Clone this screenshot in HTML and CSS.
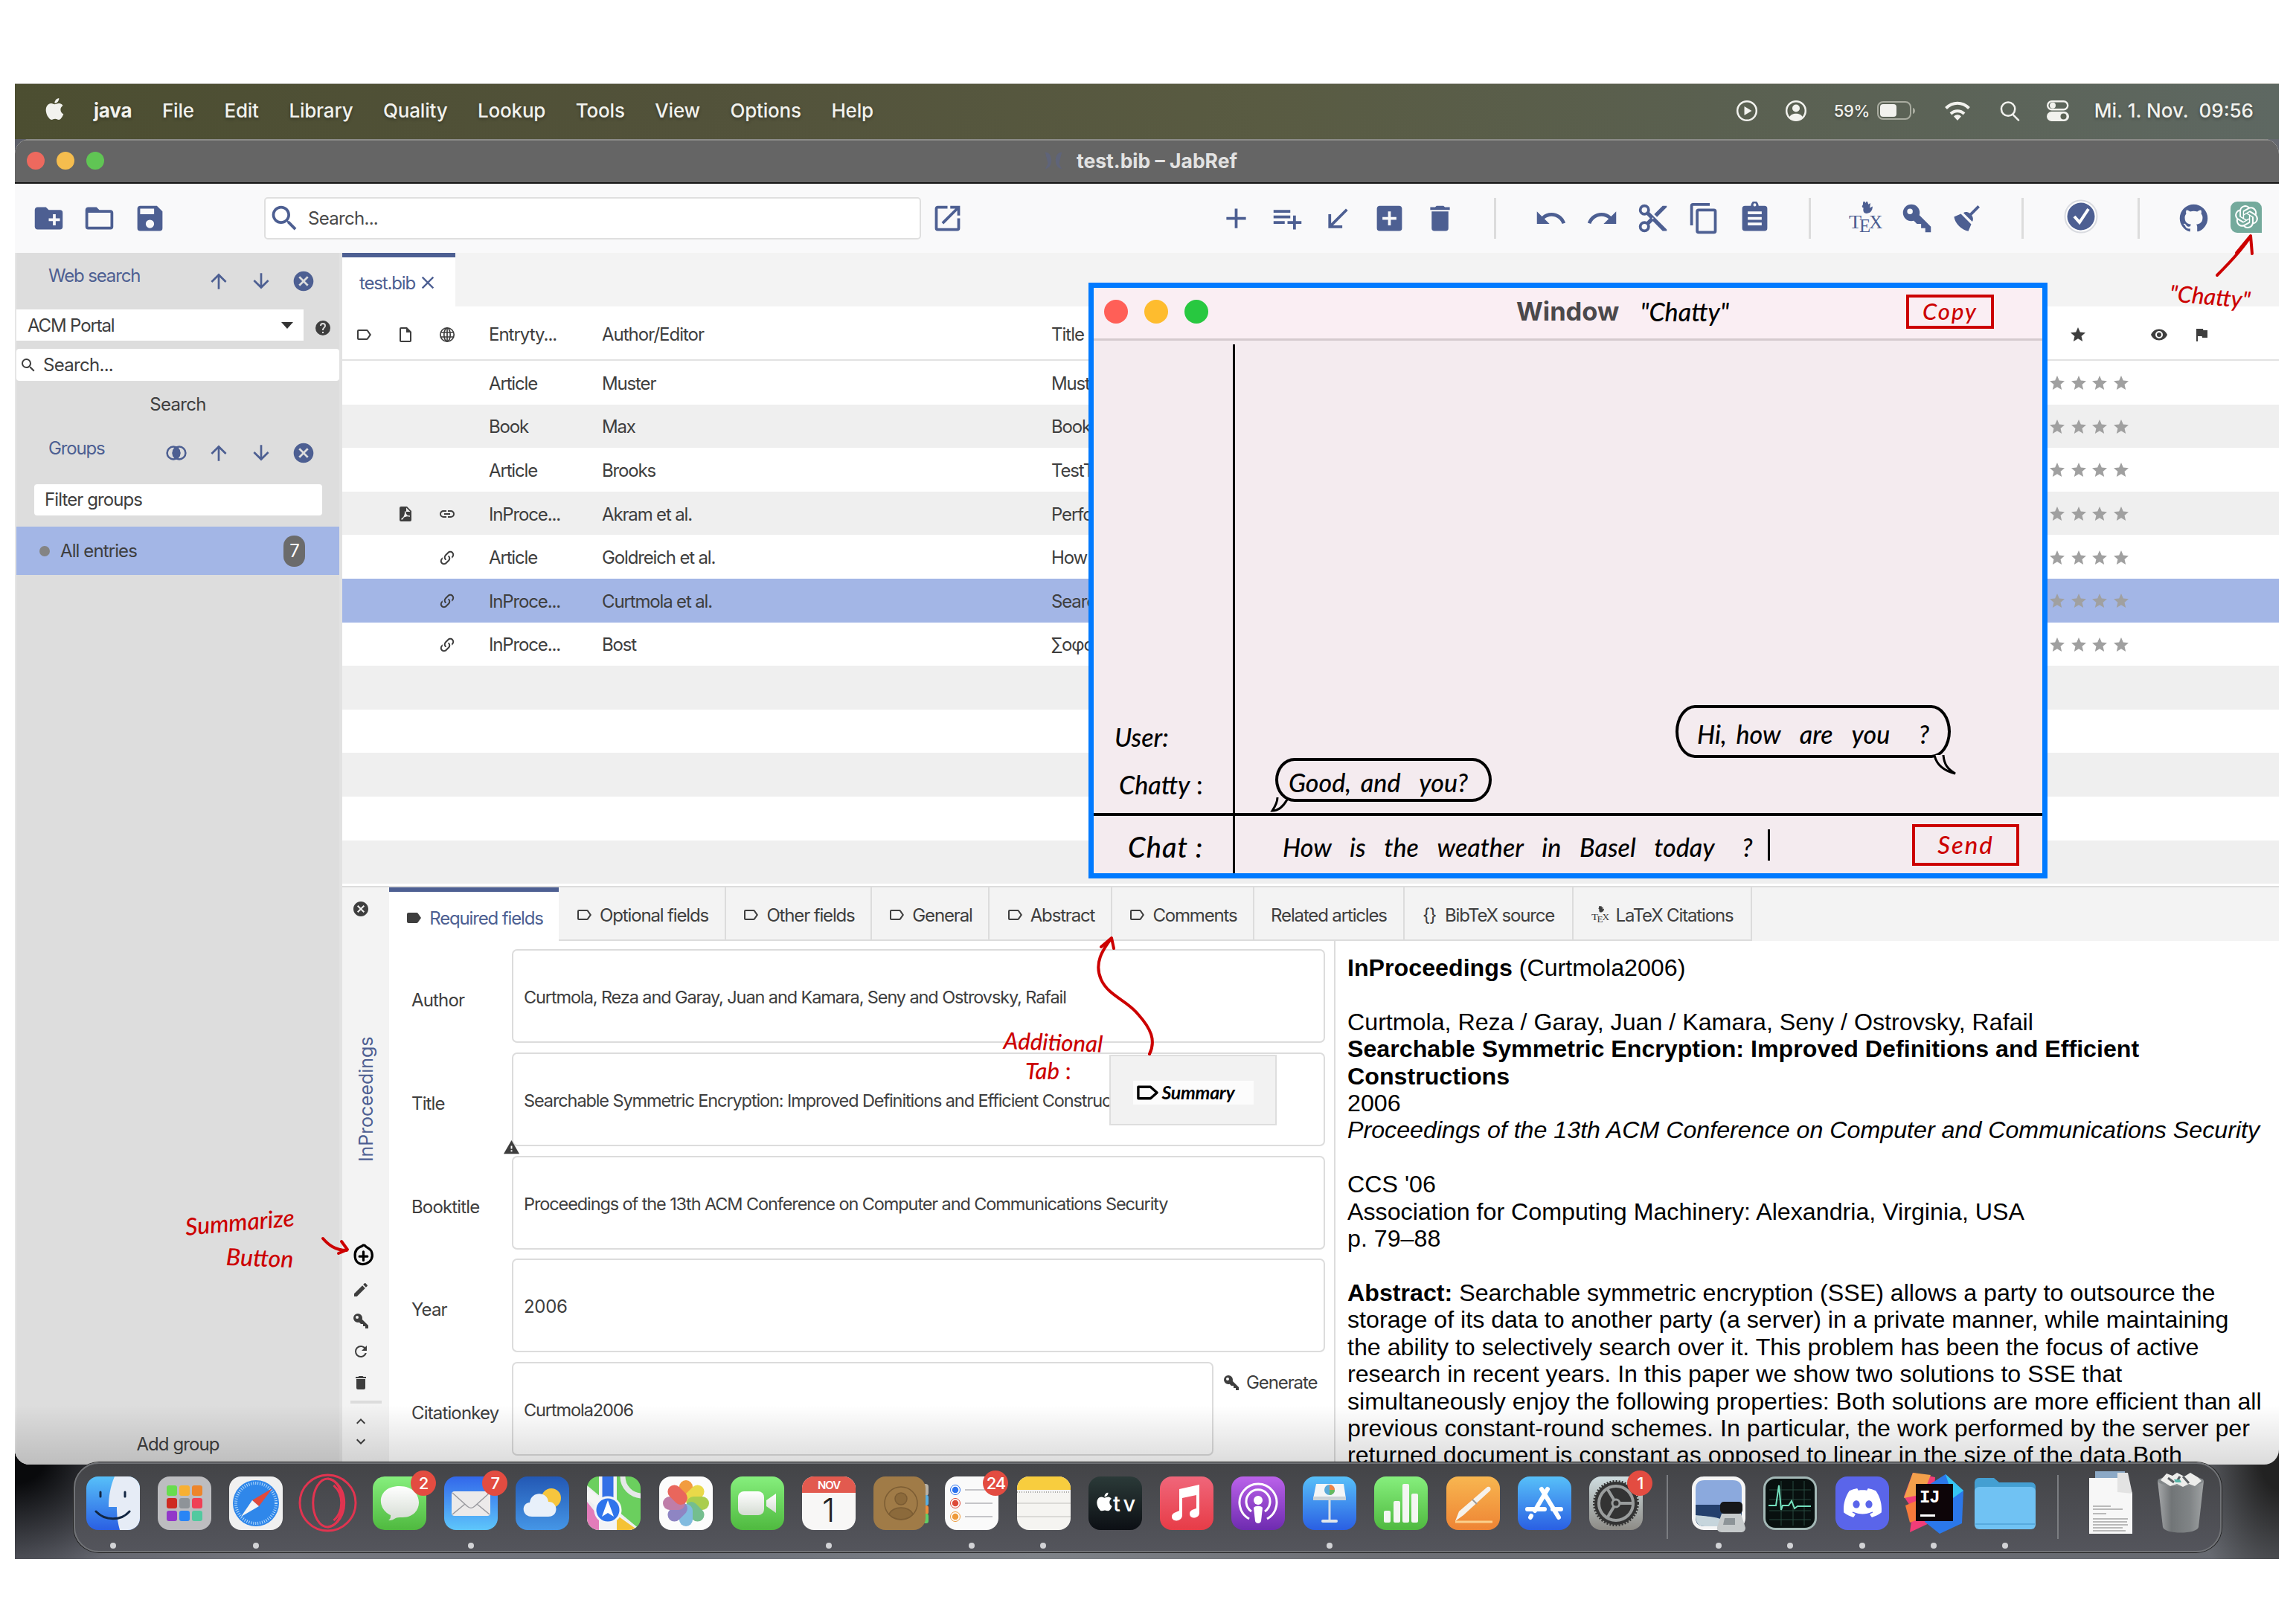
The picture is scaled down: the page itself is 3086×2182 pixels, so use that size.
FILE: index.html
```html
<!DOCTYPE html>
<html lang="en">
<head>
<meta charset="utf-8">
<title>test.bib – JabRef</title>
<link rel="stylesheet" href="styles.css">
</head>
<body>
<svg class="defs" width="0" height="0">
<defs>
<symbol id="apple" viewBox="0 0 24 24"><path d="M12.152 6.896c-.948 0-2.415-1.078-3.96-1.04-2.04.027-3.91 1.183-4.961 3.014-2.117 3.675-.546 9.103 1.519 12.09 1.013 1.454 2.208 3.09 3.792 3.039 1.52-.065 2.09-.987 3.935-.987 1.831 0 2.35.987 3.96.948 1.637-.026 2.676-1.48 3.676-2.948 1.156-1.688 1.636-3.325 1.662-3.415-.039-.013-3.182-1.221-3.22-4.857-.026-3.04 2.48-4.494 2.597-4.559-1.429-2.09-3.623-2.324-4.39-2.376-2-.156-3.675 1.09-4.61 1.09zM15.53 3.83c.843-1.012 1.4-2.427 1.245-3.83-1.207.052-2.662.805-3.532 1.818-.78.896-1.454 2.338-1.273 3.714 1.338.104 2.715-.688 3.559-1.701"/></symbol>
<symbol id="folder-plus" viewBox="0 0 24 24"><path d="M10,4L12,6H20A2,2 0 0,1 22,8V18A2,2 0 0,1 20,20H4C2.89,20 2,19.1 2,18V6C2,4.89 2.89,4 4,4H10M15,9V12H12V14H15V17H17V14H20V12H17V9H15Z"/></symbol>
<symbol id="folder" viewBox="0 0 24 24"><path d="M20,18H4V8H20M20,6H12L10,4H4C2.89,4 2,4.89 2,6V18A2,2 0 0,0 4,20H20A2,2 0 0,0 22,18V8C22,6.89 21.1,6 20,6Z"/></symbol>
<symbol id="save" viewBox="0 0 24 24"><path d="M15,9H5V5H15M12,19A3,3 0 0,1 9,16A3,3 0 0,1 12,13A3,3 0 0,1 15,16A3,3 0 0,1 12,19M17,3H5C3.89,3 3,3.9 3,5V19A2,2 0 0,0 5,21H19A2,2 0 0,0 21,19V7L17,3Z"/></symbol>
<symbol id="magnify" viewBox="0 0 24 24"><path d="M9.5,3A6.5,6.5 0 0,1 16,9.5C16,11.11 15.41,12.59 14.44,13.73L14.71,14H15.5L20.5,19L19,20.5L14,15.5V14.71L13.73,14.44C12.59,15.41 11.11,16 9.5,16A6.5,6.5 0 0,1 3,9.5A6.5,6.5 0 0,1 9.5,3M9.5,5C7,5 5,7 5,9.5C5,12 7,14 9.5,14C12,14 14,12 14,9.5C14,7 12,5 9.5,5Z"/></symbol>
<symbol id="open" viewBox="0 0 24 24"><path d="M14,3V5H17.59L7.76,14.83L9.17,16.24L19,6.41V10H21V3M19,19H5V5H12V3H5C3.89,3 3,3.9 3,5V19A2,2 0 0,0 5,21H19A2,2 0 0,0 21,19V12H19V19Z"/></symbol>
<symbol id="plus" viewBox="0 0 24 24"><path d="M19,13H13V19H11V13H5V11H11V5H13V11H19V13Z"/></symbol>
<symbol id="list-plus" viewBox="0 0 24 24"><path d="M2,16H10V14H2M18,14V10H16V14H12V16H16V20H18V16H22V14M14,6H2V8H14M14,10H2V12H14V10Z"/></symbol>
<symbol id="arrow-bl" viewBox="0 0 24 24"><path d="M19,6.41L17.59,5L7,15.59V9H5V19H15V17H8.41L19,6.41Z"/></symbol>
<symbol id="plus-box" viewBox="0 0 24 24"><path d="M17,13H13V17H11V13H7V11H11V7H13V11H17M19,3H5C3.89,3 3,3.89 3,5V19A2,2 0 0,0 5,21H19A2,2 0 0,0 21,19V5C21,3.89 20.1,3 19,3Z"/></symbol>
<symbol id="delete" viewBox="0 0 24 24"><path d="M19,4H15.5L14.5,3H9.5L8.5,4H5V6H19M6,19A2,2 0 0,0 8,21H16A2,2 0 0,0 18,19V7H6V19Z"/></symbol>
<symbol id="undo" viewBox="0 0 24 24"><path d="M12.5,8C9.85,8 7.45,9 5.6,10.6L2,7V16H11L7.38,12.38C8.77,11.22 10.54,10.5 12.5,10.5C16.04,10.5 19.05,12.81 20.1,16L22.47,15.22C21.08,11.03 17.15,8 12.5,8Z"/></symbol>
<symbol id="redo" viewBox="0 0 24 24"><path d="M18.4,10.6C16.55,9 14.15,8 11.5,8C6.85,8 2.92,11.03 1.54,15.22L3.9,16C4.95,12.81 7.95,10.5 11.5,10.5C13.45,10.5 15.23,11.22 16.62,12.38L13,16H22V7L18.4,10.6Z"/></symbol>
<symbol id="cut" viewBox="0 0 24 24"><path d="M19,3L13,9L15,11L22,4V3M12,12.5A0.5,0.5 0 0,1 11.5,12A0.5,0.5 0 0,1 12,11.5A0.5,0.5 0 0,1 12.5,12A0.5,0.5 0 0,1 12,12.5M6,20A2,2 0 0,1 4,18C4,16.89 4.9,16 6,16A2,2 0 0,1 8,18C8,19.11 7.1,20 6,20M6,8A2,2 0 0,1 4,6C4,4.89 4.9,4 6,4A2,2 0 0,1 8,6C8,7.11 7.1,8 6,8M9.64,7.64C9.87,7.14 10,6.59 10,6A4,4 0 0,0 6,2A4,4 0 0,0 2,6A4,4 0 0,0 6,10C6.59,10 7.14,9.87 7.64,9.64L10,12L7.64,14.36C7.14,14.13 6.59,14 6,14A4,4 0 0,0 2,18A4,4 0 0,0 6,22A4,4 0 0,0 10,18C10,17.41 9.87,16.86 9.64,16.36L12,14L19,21H22V20L9.64,7.64Z"/></symbol>
<symbol id="copy" viewBox="0 0 24 24"><path d="M19,21H8V7H19M19,5H8A2,2 0 0,0 6,7V21A2,2 0 0,0 8,23H19A2,2 0 0,0 21,21V7A2,2 0 0,0 19,5M16,1H4A2,2 0 0,0 2,3V17H4V3H16V1Z"/></symbol>
<symbol id="paste" viewBox="0 0 24 24"><path d="M17,9H7V7H17M17,13H7V11H17M17,17H7V15H17M12,1.2A1,1 0 0,1 13,2.2A1,1 0 0,1 12,3.4A1,1 0 0,1 11,2.2A1,1 0 0,1 12,1.2M19,3H14.82C14.4,.84 13.3,-.6 12,-.6C10.7,-.6 9.6,.84 9.18,3H5A2,2 0 0,0 3,5V19A2,2 0 0,0 5,21H19A2,2 0 0,0 21,19V5A2,2 0 0,0 19,3Z"/></symbol>
<symbol id="tex" viewBox="0 0 48 48"><path d="M21 -3l3 5 2-4 2 6 3-2-1 7 4-2c0 7-4 10-9 10-4 0-5-4-4-8-2 0-3-3-1-4z"/><text x="0" y="38" font-family="Liberation Serif" font-size="27" textLength="17" lengthAdjust="spacingAndGlyphs">T</text><text x="15" y="44" font-family="Liberation Serif" font-size="27" textLength="15" lengthAdjust="spacingAndGlyphs">E</text><text x="29" y="38" font-family="Liberation Serif" font-size="27" textLength="18" lengthAdjust="spacingAndGlyphs">X</text></symbol>
<symbol id="key" viewBox="0 0 24 24"><path d="M22,18V22H18V19H15V16H12L9.74,13.74C9.19,13.91 8.61,14 8,14A6,6 0 0,1 2,8A6,6 0 0,1 8,2A6,6 0 0,1 14,8C14,8.61 13.91,9.19 13.74,9.74L22,18M7,5A2,2 0 0,0 5,7A2,2 0 0,0 7,9A2,2 0 0,0 9,7A2,2 0 0,0 7,5Z"/></symbol>
<symbol id="broom" viewBox="0 0 24 24"><path d="M19.36,2.72L20.78,4.14L15.06,9.85C16.13,11.39 16.28,13.24 15.38,14.44L9.06,8.12C10.26,7.22 12.11,7.37 13.65,8.44L19.36,2.72M5.93,17.57C3.92,15.56 2.69,13.16 2.35,10.92L7.23,8.83L14.67,16.27L12.58,21.15C10.34,20.81 7.94,19.58 5.93,17.57Z"/></symbol>
<symbol id="github" viewBox="0 0 24 24"><path d="M12,2A10,10 0 0,0 2,12C2,16.42 4.87,20.17 8.84,21.5C9.34,21.58 9.5,21.27 9.5,21C9.5,20.77 9.5,20.14 9.5,19.31C6.73,19.91 6.14,17.97 6.14,17.97C5.68,16.81 5.03,16.5 5.03,16.5C4.12,15.88 5.1,15.9 5.1,15.9C6.1,15.97 6.63,16.93 6.63,16.93C7.5,18.45 8.97,18 9.54,17.76C9.63,17.11 9.89,16.67 10.17,16.42C7.95,16.17 5.62,15.31 5.62,11.5C5.62,10.39 6,9.5 6.65,8.79C6.55,8.54 6.2,7.5 6.75,6.15C6.75,6.15 7.59,5.88 9.5,7.17C10.29,6.95 11.15,6.84 12,6.84C12.85,6.84 13.71,6.95 14.5,7.17C16.41,5.88 17.25,6.15 17.25,6.15C17.8,7.5 17.45,8.54 17.35,8.79C18,9.5 18.38,10.39 18.38,11.5C18.38,15.32 16.04,16.16 13.81,16.41C14.17,16.72 14.5,17.33 14.5,18.26C14.5,19.6 14.5,20.68 14.5,21C14.5,21.27 14.66,21.59 15.17,21.5C19.14,20.16 22,16.42 22,12A10,10 0 0,0 12,2Z"/></symbol>
<symbol id="openai" viewBox="0 0 24 24"><path d="M22.2819 9.8211a5.9847 5.9847 0 0 0-.5157-4.9108 6.0462 6.0462 0 0 0-6.5098-2.9A6.0651 6.0651 0 0 0 4.9807 4.1818a5.9847 5.9847 0 0 0-3.9977 2.9 6.0462 6.0462 0 0 0 .7427 7.0966 5.98 5.98 0 0 0 .511 4.9107 6.051 6.051 0 0 0 6.5146 2.9001A5.9847 5.9847 0 0 0 13.2599 24a6.0557 6.0557 0 0 0 5.7718-4.2058 5.9894 5.9894 0 0 0 3.9977-2.9001 6.0557 6.0557 0 0 0-.7475-7.0729zm-9.022 12.6081a4.4755 4.4755 0 0 1-2.8764-1.0408l.1419-.0804 4.7783-2.7582a.7948.7948 0 0 0 .3927-.6813v-6.7369l2.02 1.1686a.071.071 0 0 1 .038.052v5.5826a4.504 4.504 0 0 1-4.4945 4.4944zm-9.6607-4.1254a4.4708 4.4708 0 0 1-.5346-3.0137l.142.0852 4.783 2.7582a.7712.7712 0 0 0 .7806 0l5.8428-3.3685v2.3324a.0804.0804 0 0 1-.0332.0615L9.74 19.9502a4.4992 4.4992 0 0 1-6.1408-1.6464zM2.3408 7.8956a4.485 4.485 0 0 1 2.3655-1.9728V11.6a.7664.7664 0 0 0 .3879.6765l5.8144 3.3543-2.0201 1.1685a.0757.0757 0 0 1-.071 0l-4.8303-2.7865A4.504 4.504 0 0 1 2.3408 7.872zm16.5963 3.8558L13.1038 8.364 15.1192 7.2a.0757.0757 0 0 1 .071 0l4.8303 2.7913a4.4944 4.4944 0 0 1-.6765 8.1042v-5.6772a.79.79 0 0 0-.407-.667zm2.0107-3.0231l-.142-.0852-4.7735-2.7818a.7759.7759 0 0 0-.7854 0L9.409 9.2297V6.8974a.0662.0662 0 0 1 .0284-.0615l4.8303-2.7866a4.4992 4.4992 0 0 1 6.6802 4.66zM8.3065 12.863l-2.02-1.1638a.0804.0804 0 0 1-.038-.0567V6.0742a4.4992 4.4992 0 0 1 7.3757-3.4537l-.142.0805L8.704 5.459a.7948.7948 0 0 0-.3927.6813zm1.0976-2.3654l2.602-1.4998 2.6069 1.4998v2.9994l-2.5974 1.4997-2.6067-1.4997Z"/></symbol>
<symbol id="up" viewBox="0 0 24 24"><path d="M13,20H11V8L5.5,13.5L4.08,12.08L12,4.16L19.92,12.08L18.5,13.5L13,8V20Z"/></symbol>
<symbol id="down" viewBox="0 0 24 24"><path d="M11,4H13V16L18.500,10.500L19.920,11.920L12,19.840L4.080,11.920L5.500,10.500L11,16V4Z"/></symbol>
<symbol id="close-circle" viewBox="0 0 24 24"><path d="M12,2C17.53,2 22,6.47 22,12C22,17.53 17.53,22 12,22C6.47,22 2,17.53 2,12C2,6.47 6.47,2 12,2M15.59,7L12,10.59L8.41,7L7,8.41L10.59,12L7,15.59L8.41,17L12,13.41L15.59,17L17,15.59L13.41,12L17,8.41L15.59,7Z"/></symbol>
<symbol id="close" viewBox="0 0 24 24"><path d="M19,6.41L17.59,5L12,10.59L6.41,5L5,6.41L10.59,12L5,17.59L6.41,19L12,13.41L17.59,19L19,17.59L13.41,12L19,6.41Z"/></symbol>
<symbol id="help" viewBox="0 0 24 24"><path d="M15.07,11.25L14.17,12.17C13.45,12.89 13,13.5 13,15H11V14.5C11,13.39 11.45,12.39 12.17,11.67L13.41,10.41C13.78,10.05 14,9.55 14,9C14,7.89 13.1,7 12,7A2,2 0 0,0 10,9H8A4,4 0 0,1 12,5A4,4 0 0,1 16,9C16,9.88 15.64,10.67 15.07,11.25M13,19H11V17H13M12,2A10,10 0 0,0 2,12A10,10 0 0,0 12,22A10,10 0 0,0 22,12C22,6.47 17.5,2 12,2Z"/></symbol>
<symbol id="intersect" viewBox="0 0 24 24"><g fill="none" stroke="currentColor" stroke-width="1.900"><circle cx="9" cy="12" r="6.300"/><circle cx="15" cy="12" r="6.300"/></g><path d="M12 6a6.500 6.500 0 0 1 0 12a6.500 6.500 0 0 1 0-12z"/></symbol>
<symbol id="file" viewBox="0 0 24 24"><path d="M14,2H6A2,2 0 0,0 4,4V20A2,2 0 0,0 6,22H18A2,2 0 0,0 20,20V8L14,2M18,20H6V4H13V9H18V20Z"/></symbol>
<symbol id="pdf" viewBox="0 0 24 24"><path fill-rule="evenodd" d="M14,2H6A2,2 0 0,0 4,4V20A2,2 0 0,0 6,22H18A2,2 0 0,0 20,20V8L14,2M13,3.500L18.500,9H13ZM10.900,8.500h1.600c-.3 2.500.5 4 2.500 5.400l3 .3v1.600l-4-.5-4 1.200-2 3h-1.800l.3-1.200 2.700-2.400c1.500-2.600 2-4.700 1.700-7.400z"/></symbol>
<symbol id="globe" viewBox="0 0 24 24"><g fill="none" stroke="currentColor" stroke-width="1.700"><circle cx="12" cy="12" r="9.200"/><ellipse cx="12" cy="12" rx="4.200" ry="9"/><path d="M12 3v18M3.500 9h17M3.500 15h17"/></g></symbol>
<symbol id="tag" viewBox="0 0 24 24"><path d="M16,17H5V7H16L19.55,12M17.63,5.84C17.27,5.33 16.67,5 16,5H5A2,2 0 0,0 3,7V17A2,2 0 0,0 5,19H16C16.67,19 17.27,18.66 17.63,18.15L22,12L17.63,5.84Z"/></symbol>
<symbol id="tag-fill" viewBox="0 0 24 24"><path d="M17.63,5.84C17.27,5.33 16.67,5 16,5H5A2,2 0 0,0 3,7V17A2,2 0 0,0 5,19H16C16.67,19 17.27,18.66 17.63,18.15L22,12L17.63,5.84Z"/></symbol>
<symbol id="linkv" viewBox="0 0 24 24"><path d="M10.59,13.41C11,13.8 11,14.44 10.59,14.83C10.2,15.22 9.56,15.22 9.17,14.83C7.22,12.88 7.22,9.71 9.17,7.76V7.76L12.71,4.22C14.66,2.27 17.83,2.27 19.78,4.22C21.73,6.17 21.73,9.34 19.78,11.29L18.29,12.78C18.3,11.96 18.17,11.14 17.89,10.36L18.36,9.88C19.54,8.71 19.54,6.81 18.36,5.64C17.19,4.46 15.29,4.46 14.12,5.64L10.59,9.17C9.41,10.34 9.41,12.24 10.59,13.41M13.41,9.17C13.8,8.78 14.44,8.78 14.83,9.17C16.78,11.12 16.78,14.29 14.83,16.24V16.24L11.29,19.78C9.34,21.73 6.17,21.73 4.22,19.78C2.27,17.83 2.27,14.66 4.22,12.71L5.71,11.22C5.7,12.04 5.83,12.86 6.11,13.65L5.64,14.12C4.46,15.29 4.46,17.19 5.64,18.36C6.81,19.54 8.71,19.54 9.88,18.36L13.41,14.83C14.59,13.66 14.59,11.76 13.41,10.59C13,10.2 13,9.56 13.41,9.17Z"/></symbol>
<symbol id="link" viewBox="0 0 24 24"><path d="M3.9,12C3.9,10.29 5.29,8.9 7,8.9H11V7H7A5,5 0 0,0 2,12A5,5 0 0,0 7,17H11V15.1H7C5.29,15.1 3.9,13.71 3.9,12M8,13H16V11H8V13M17,7H13V8.9H17C18.71,8.9 20.1,10.29 20.1,12C20.1,13.71 18.71,15.1 17,15.1H13V17H17A5,5 0 0,0 22,12A5,5 0 0,0 17,7Z"/></symbol>
<symbol id="star" viewBox="0 0 24 24"><path d="M12,17.27L18.18,21L16.54,13.97L22,9.24L14.81,8.62L12,2L9.19,8.62L2,9.24L7.45,13.97L5.82,21L12,17.27Z"/></symbol>
<symbol id="eye" viewBox="0 0 24 24"><path d="M12,9A3,3 0 0,0 9,12A3,3 0 0,0 12,15A3,3 0 0,0 15,12A3,3 0 0,0 12,9M12,17A5,5 0 0,1 7,12A5,5 0 0,1 12,7A5,5 0 0,1 17,12A5,5 0 0,1 12,17M12,4.5C7,4.5 2.73,7.61 1,12C2.73,16.39 7,19.5 12,19.5C17,19.5 21.27,16.39 23,12C21.27,7.61 17,4.5 12,4.5Z"/></symbol>
<symbol id="flag" viewBox="0 0 24 24"><path d="M14.4,6L14,4H5V21H7V14H12.6L13,16H20V6H14.4Z"/></symbol>
<symbol id="pencil" viewBox="0 0 24 24"><path d="M20.71,7.04C21.1,6.65 21.1,6 20.71,5.63L18.37,3.29C18,2.9 17.35,2.9 16.96,3.29L15.12,5.12L18.87,8.87M3,17.25V21H6.75L17.81,9.93L14.06,6.18L3,17.25Z"/></symbol>
<symbol id="refresh" viewBox="0 0 24 24"><path d="M17.65,6.35C16.2,4.9 14.21,4 12,4A8,8 0 0,0 4,12A8,8 0 0,0 12,20C15.73,20 18.84,17.45 19.73,14H17.65C16.83,16.33 14.61,18 12,18A6,6 0 0,1 6,12A6,6 0 0,1 12,6C13.66,6 15.14,6.69 16.22,7.78L13,11H20V4L17.65,6.35Z"/></symbol>
<symbol id="chev-up" viewBox="0 0 24 24"><path d="M7.41,15.41L12,10.83L16.59,15.41L18,14L12,8L6,14L7.41,15.41Z"/></symbol>
<symbol id="chev-down" viewBox="0 0 24 24"><path d="M7.41,8.590L12,13.170L16.590,8.590L18,10L12,16L6,10L7.410,8.590Z"/></symbol>
<symbol id="alert" viewBox="0 0 24 24"><path d="M13,14H11V10H13M13,18H11V16H13M1,21H23L12,2L1,21Z"/></symbol>
<symbol id="discord" viewBox="0 0 24 24"><path d="M20.317 4.3698a19.7913 19.7913 0 00-4.8851-1.5152.0741.0741 0 00-.0785.0371c-.211.3753-.4447.8648-.6083 1.2495-1.8447-.2762-3.68-.2762-5.4868 0-.1636-.3933-.4058-.8742-.6177-1.2495a.077.077 0 00-.0785-.037 19.7363 19.7363 0 00-4.8852 1.515.0699.0699 0 00-.0321.0277C.5334 9.0458-.319 13.5799.0992 18.0578a.0824.0824 0 00.0312.0561c2.0528 1.5076 4.0413 2.4228 5.9929 3.0294a.0777.0777 0 00.0842-.0276c.4616-.6304.8731-1.2952 1.226-1.9942a.076.076 0 00-.0416-.1057c-.6528-.2476-1.2743-.5495-1.8722-.8923a.077.077 0 01-.0076-.1277c.1258-.0943.2517-.1923.3718-.2914a.0743.0743 0 01.0776-.0105c3.9278 1.7933 8.18 1.7933 12.0614 0a.0739.0739 0 01.0785.0095c.1202.099.246.1981.3728.2924a.077.077 0 01-.0066.1276 12.2986 12.2986 0 01-1.873.8914.0766.0766 0 00-.0407.1067c.3604.698.7719 1.3628 1.225 1.9932a.076.076 0 00.0842.0286c1.961-.6067 3.9495-1.5219 6.0023-3.0294a.077.077 0 00.0313-.0552c.5004-5.177-.8382-9.6739-3.5485-13.6604a.061.061 0 00-.0312-.0286zM8.02 15.3312c-1.1825 0-2.1569-1.0857-2.1569-2.419 0-1.3332.9555-2.4189 2.157-2.4189 1.2108 0 2.1757 1.0952 2.1568 2.419 0 1.3332-.9555 2.4189-2.1569 2.4189zm7.9748 0c-1.1825 0-2.1569-1.0857-2.1569-2.419 0-1.3332.9554-2.4189 2.1569-2.4189 1.2108 0 2.1757 1.0952 2.1568 2.419 0 1.3332-.946 2.4189-2.1568 2.4189Z"/></symbol>
<linearGradient id="gGreen" x2="0" y2="1"><stop stop-color="#86ef7d"/><stop offset="1" stop-color="#4fb93f"/></linearGradient>
<linearGradient id="gBlue" x2="0" y2="1"><stop stop-color="#3267ea"/><stop offset="1" stop-color="#5ec6fb"/></linearGradient>
<linearGradient id="gBlue2" x2="0" y2="1"><stop stop-color="#57c0f9"/><stop offset="1" stop-color="#2a5fe3"/></linearGradient>
<linearGradient id="gWeather" x2="0" y2="1"><stop stop-color="#2358b4"/><stop offset="1" stop-color="#4596e6"/></linearGradient>
<linearGradient id="gRed" x2="0" y2="1"><stop stop-color="#f0667a"/><stop offset="1" stop-color="#e73c47"/></linearGradient>
<linearGradient id="gPurple" x2="0" y2="1"><stop stop-color="#bb62ea"/><stop offset="1" stop-color="#6e2bb0"/></linearGradient>
<linearGradient id="gOrange" x2="0" y2="1"><stop stop-color="#f8b650"/><stop offset="1" stop-color="#ee8434"/></linearGradient>
<linearGradient id="gDark" x2="0" y2="1"><stop stop-color="#2b3a38"/><stop offset="1" stop-color="#0c0f14"/></linearGradient>
<linearGradient id="gGlass" x2="1" y2="0"><stop stop-color="#a5a7a9"/><stop offset=".3" stop-color="#717577"/><stop offset=".7" stop-color="#808486"/><stop offset="1" stop-color="#9fa2a3"/></linearGradient>
<linearGradient id="gSilver" x2="0" y2="1"><stop stop-color="#cfdde0"/><stop offset="1" stop-color="#8d8b86"/></linearGradient>
<linearGradient id="gWhite" x2="0" y2="1"><stop stop-color="#fff"/><stop offset="1" stop-color="#d5dcd3"/></linearGradient>
<clipPath id="round"><rect width="72" height="72" rx="16"/></clipPath>
</defs>
</svg>

<main class="desktop">
  <header class="menubar">
    <svg class="apple"><use href="#apple"/></svg>
    <nav class="menus"><b>java</b><span>File</span><span>Edit</span><span>Library</span><span>Quality</span><span>Lookup</span><span>Tools</span><span>View</span><span>Options</span><span>Help</span></nav>
    <div class="status">
      <svg class="s-play" viewBox="0 0 30 30"><circle cx="15" cy="15" r="12.800" fill="none" stroke="#f2f2ee" stroke-width="2.500"/><path d="M11.500 9l10 6-10 6z"/></svg>
      <svg class="s-user" viewBox="0 0 30 30"><circle cx="15" cy="15" r="12.800" fill="none" stroke="#f2f2ee" stroke-width="2.500"/><circle cx="15" cy="11.500" r="5"/><path d="M6 24c2-7 16-7 18 0-4 5-14 5-18 0z"/></svg>
      <span class="pct">59%</span>
      <svg class="s-bat" viewBox="0 0 52 26"><rect x="1" y="1" width="44" height="23" rx="7" fill="none" stroke="#a9aca0" stroke-width="2"/><rect x="4" y="4" width="22" height="17" rx="4"/><path d="M48 9c4 1 4 7 0 8z" fill="#a9aca0"/></svg>
      <svg class="s-wifi" viewBox="0 0 36 26"><path d="M18 26l-5-5.500c3-3 7-3 10 0z"/><path d="M9 17c5-5 13-5 18 0M2.500 9.500c9-9 22-9 31 0" fill="none" stroke="#f2f2ee" stroke-width="4"/></svg>
      <svg class="s-search" viewBox="0 0 28 28"><g fill="none" stroke="#f2f2ee" stroke-width="2.600"><circle cx="11.500" cy="11.500" r="9.500"/><path d="M18 19l8 8" stroke-linecap="round"/></g></svg>
      <svg class="s-ctl" viewBox="0 0 30 28"><rect x="1.200" y="1.200" width="27" height="11" rx="5.500" fill="none" stroke="#f2f2ee" stroke-width="2.400"/><circle cx="8" cy="6.700" r="4"/><rect y="15" width="30" height="13" rx="6.500"/><circle cx="22.500" cy="21.500" r="4" fill="#5c6355"/></svg>
      <span class="clock">Mi. 1. Nov.&nbsp; 09:56</span>
    </div>
  </header>

  <section class="app">
    <div class="titlebar"><i class="tl r"></i><i class="tl y"></i><i class="tl g"></i><svg class="doc-mark" viewBox="0 0 30 30"><path d="M3 3c8 0 9 8 9 12s-2 11-9 12l4-8zM27 3c-8 0-9 8-9 12s2 11 9 12l-4-8z" fill="#5f6479"/></svg><strong>test.bib – JabRef</strong></div>

    <div class="toolbar">
      <svg class="ic tb-new"><use href="#folder-plus"/></svg>
      <svg class="ic tb-open"><use href="#folder"/></svg>
      <svg class="ic tb-save"><use href="#save"/></svg>
      <div class="searchbox"><svg class="ic"><use href="#magnify"/></svg><span>Search...</span></div>
      <svg class="ic tb-pop"><use href="#open"/></svg>
      <div class="group g1"><svg class="ic"><use href="#plus"/></svg><svg class="ic"><use href="#list-plus"/></svg><svg class="ic"><use href="#arrow-bl"/></svg><svg class="ic"><use href="#plus-box"/></svg><svg class="ic"><use href="#delete"/></svg></div>
      <i class="sep s1"></i>
      <div class="group g2"><svg class="ic"><use href="#undo"/></svg><svg class="ic"><use href="#redo"/></svg><svg class="ic"><use href="#cut"/></svg><svg class="ic"><use href="#copy"/></svg><svg class="ic over"><use href="#paste"/></svg></div>
      <i class="sep s2"></i>
      <div class="group g3"><svg class="ic"><use href="#tex"/></svg><svg class="ic"><use href="#key"/></svg><svg class="ic"><use href="#broom"/></svg></div>
      <i class="sep s3"></i>
      <svg class="check" viewBox="0 0 46 46"><circle cx="23" cy="23" r="21.500" fill="#fff" stroke="#d9dbe0" stroke-width="2"/><circle cx="23" cy="23" r="18.500"/><path d="M14 23l7 8 12-18" fill="none" stroke="#fff" stroke-width="4"/></svg>
      <i class="sep s4"></i>
      <svg class="ic git"><use href="#github"/></svg>
      <div class="gpt"><svg><use href="#openai"/></svg></div>
    </div>

    <div class="content">
      <aside class="sidebar">
        <div class="side-head"><span>Web search</span><svg class="ic"><use href="#up"/></svg><svg class="ic"><use href="#down"/></svg><svg class="ic x"><use href="#close-circle"/></svg></div>
        <div class="combo-row"><div class="combo"><span>ACM Portal</span><i class="caret"></i></div><svg class="help"><use href="#help"/></svg></div>
        <div class="side-search"><svg><use href="#magnify"/></svg><span>Search...</span></div>
        <div class="side-btn">Search</div>
        <div class="side-head groups"><span>Groups</span><svg class="ic"><use href="#intersect"/></svg><svg class="ic"><use href="#up"/></svg><svg class="ic"><use href="#down"/></svg><svg class="ic x"><use href="#close-circle"/></svg></div>
        <div class="filter">Filter groups</div>
        <div class="all"><i></i><span>All entries</span><b>7</b></div>
        <div class="add">Add group</div>
      </aside>

      <div class="main">
        <div class="libtabs"><div class="libtab">test.bib<svg><use href="#close"/></svg></div></div>
        <div class="thead row"><svg class="ti"><use href="#tag"/></svg><svg class="ti"><use href="#file"/></svg><svg class="ti"><use href="#globe"/></svg><span>Entryty...</span><span>Author/Editor</span><span>Title</span><div class="flags"><svg><use href="#star"/></svg><svg><use href="#eye"/></svg><svg><use href="#flag"/></svg></div></div>
        <div class="rows">
          <div class="row"><i></i><i></i><i></i><span>Article</span><span>Muster</span><span>Must</span><div class="stars"><svg><use href="#star"/></svg><svg><use href="#star"/></svg><svg><use href="#star"/></svg><svg><use href="#star"/></svg></div></div>
          <div class="row"><i></i><i></i><i></i><span>Book</span><span>Max</span><span>Book</span><div class="stars"><svg><use href="#star"/></svg><svg><use href="#star"/></svg><svg><use href="#star"/></svg><svg><use href="#star"/></svg></div></div>
          <div class="row"><i></i><i></i><i></i><span>Article</span><span>Brooks</span><span>TestT</span><div class="stars"><svg><use href="#star"/></svg><svg><use href="#star"/></svg><svg><use href="#star"/></svg><svg><use href="#star"/></svg></div></div>
          <div class="row"><i></i><svg class="ti"><use href="#pdf"/></svg><svg class="ti"><use href="#link"/></svg><span>InProce...</span><span>Akram et al.</span><span>Perfo</span><div class="stars"><svg><use href="#star"/></svg><svg><use href="#star"/></svg><svg><use href="#star"/></svg><svg><use href="#star"/></svg></div></div>
          <div class="row"><i></i><i></i><svg class="ti"><use href="#linkv"/></svg><span>Article</span><span>Goldreich et al.</span><span>How</span><div class="stars"><svg><use href="#star"/></svg><svg><use href="#star"/></svg><svg><use href="#star"/></svg><svg><use href="#star"/></svg></div></div>
          <div class="row sel"><i></i><i></i><svg class="ti"><use href="#linkv"/></svg><span>InProce...</span><span>Curtmola et al.</span><span>Searc</span><div class="stars"><svg><use href="#star"/></svg><svg><use href="#star"/></svg><svg><use href="#star"/></svg><svg><use href="#star"/></svg></div></div>
          <div class="row"><i></i><i></i><svg class="ti"><use href="#linkv"/></svg><span>InProce...</span><span>Bost</span><span>∑oφo</span><div class="stars"><svg><use href="#star"/></svg><svg><use href="#star"/></svg><svg><use href="#star"/></svg><svg><use href="#star"/></svg></div></div>
          <div class="row"></div><div class="row"></div><div class="row"></div><div class="row"></div><div class="row"></div>
        </div>

        <div class="editor">
          <div class="rail">
            <svg class="r-close"><use href="#close-circle"/></svg>
            <span class="r-type">InProceedings</span>
            <svg class="r-sum" viewBox="0 0 28 30"><path d="M12 4c-7 2-10 7-9 14 1 8 8 10 14 8 6-2 9-8 7-14-1-5-5-5-8-8-1-2-4-1-4 0zM13.500 11v11M8.500 17h10" fill="none" stroke="#000" stroke-width="3" stroke-linecap="round" stroke-linejoin="round"/></svg>
            <svg><use href="#pencil"/></svg><svg><use href="#key"/></svg><svg><use href="#refresh"/></svg><svg><use href="#delete"/></svg>
            <i></i>
            <svg class="chev"><use href="#chev-up"/></svg><svg class="chev"><use href="#chev-down"/></svg>
          </div>
          <div class="ed-body">
            <div class="tabs">
              <div class="tab on w228"><svg><use href="#tag-fill"/></svg>Required fields</div>
              <div class="tab w224"><svg><use href="#tag"/></svg>Optional fields</div>
              <div class="tab w196"><svg><use href="#tag"/></svg>Other fields</div>
              <div class="tab w158"><svg><use href="#tag"/></svg>General</div>
              <div class="tab w165"><svg><use href="#tag"/></svg>Abstract</div>
              <div class="tab w191"><svg><use href="#tag"/></svg>Comments</div>
              <div class="tab w202">Related articles</div>
              <div class="tab w227"><em>{}</em>BibTeX source</div>
              <div class="tab w240"><svg><use href="#tex"/></svg>LaTeX Citations</div>
            </div>
            <div class="panes">
              <div class="form">
                <div class="frow"><label>Author</label><div class="field">Curtmola, Reza and Garay, Juan and Kamara, Seny and Ostrovsky, Rafail</div></div>
                <div class="frow"><label>Title</label><div class="field">Searchable Symmetric Encryption: Improved Definitions and Efficient Construc<svg class="warn"><use href="#alert"/></svg></div></div>
                <div class="frow"><label>Booktitle</label><div class="field">Proceedings of the 13th ACM Conference on Computer and Communications Security</div></div>
                <div class="frow"><label>Year</label><div class="field num">2006</div></div>
                <div class="frow"><label>Citationkey</label><div class="field">Curtmola2006</div><div class="gen"><svg><use href="#key"/></svg>Generate</div></div>
              </div>
              <article class="preview">
                <p><b>InProceedings</b> (Curtmola2006)</p><p>&nbsp;</p>
                <p>Curtmola, Reza / Garay, Juan / Kamara, Seny / Ostrovsky, Rafail</p>
                <p><b>Searchable Symmetric Encryption: Improved Definitions and Efficient</b></p><p><b>Constructions</b></p>
                <p>2006</p><p class="it">Proceedings of the 13th ACM Conference on Computer and Communications Security</p><p>&nbsp;</p>
                <p>CCS '06</p><p>Association for Computing Machinery: Alexandria, Virginia, USA</p><p>p. 79–88</p><p>&nbsp;</p>
                <p><b>Abstract:</b> Searchable symmetric encryption (SSE) allows a party to outsource the</p>
                <p>storage of its data to another party (a server) in a private manner, while maintaining</p>
                <p>the ability to selectively search over it. This problem has been the focus of active</p>
                <p>research in recent years. In this paper we show two solutions to SSE that</p>
                <p>simultaneously enjoy the following properties: Both solutions are more efficient than all</p>
                <p>previous constant-round schemes. In particular, the work performed by the server per</p>
                <p>returned document is constant as opposed to linear in the size of the data.Both</p>
              </article>
            </div>
          </div>
        </div>
      </div>
    </div>
    <div class="shade"></div>
  </section>

  <section class="chat">
    <div class="chat-head"><i class="tl r"></i><i class="tl y"></i><i class="tl g"></i><strong>Window</strong><span class="hand h-name">"Chatty"</span><span class="hand btn copy">Copy</span></div>
    <div class="chat-log">
      <div class="who"><span class="hand">User:</span><span class="hand">Chatty<u> :</u></span></div>
      <div class="msgs">
        <div class="bubble out hand">Hi, how&nbsp; are&nbsp; you&nbsp;&nbsp; ?<svg viewBox="0 0 34 30"><path d="M2 2c2 10 8 20 28 25-10-6-15-12-16-25" /></svg></div>
        <div class="bubble in hand">Good, and&nbsp; you?<svg viewBox="0 0 24 22"><path d="M8 2C8 9 5 14 1 20c8 0 15-6 20-15"/></svg></div>
      </div>
    </div>
    <div class="chat-in"><span class="hand lbl">Chat&nbsp;:</span><span class="hand q">How&nbsp; is&nbsp; the&nbsp; weather&nbsp; in&nbsp; Basel&nbsp; today&nbsp;&nbsp; ?</span><i class="cursor"></i><span class="hand btn send">Send</span></div>
  </section>

  <div class="newtab"><div><svg viewBox="0 0 32 22"><path d="M3 3v16h17l9-8-9-8z" fill="none" stroke="#000" stroke-width="3.500" stroke-linejoin="round"/></svg><span class="hand">Summary</span></div></div>
  <span class="hand note n-chatty">"Chatty"</span>
  <span class="hand note n-add">Additional</span>
  <span class="hand note n-tab">Tab<u> :</u></span>
  <span class="hand note n-sum">Summarize</span>
  <span class="hand note n-btn">Button</span>
  <svg class="arrow a1" viewBox="0 0 60 64"><path d="M8 60C22 46 42 25 52 9M34 30L53 7l2 24"/></svg>
  <svg class="arrow a2" viewBox="0 0 90 170"><path d="M75 162c9-18 2-34-15-53C45 90 20 84 10 62 0 40 12 22 24 6M10 18L24 6l3 14"/></svg>
  <svg class="arrow a3" viewBox="0 0 44 32"><path d="M4 5c7 8 16 16 32 16M29 9l8 11-12 5"/></svg>

  <footer class="dock">
    <div class="app-ic run"><svg viewBox="0 0 72 72"><g clip-path="url(#round)"><rect width="72" height="72" fill="url(#gBlue2)"/><path d="M38 0C32 14 30 28 30 41h11c0 12 1 20 4 31h27V0z" fill="#e6ecf6"/></g><path d="M19 21v6M52 21v6M13 47c12 13 34 13 45 0" fill="none" stroke="#122642" stroke-width="3" stroke-linecap="round"/></svg></div>
    <div class="app-ic"><svg viewBox="0 0 72 72"><rect width="72" height="72" rx="16" fill="#bdbdc0"/><g><rect x="12" y="12" width="14" height="14" rx="3" fill="#67dd4e"/><rect x="29" y="12" width="14" height="14" rx="3" fill="#f8b032"/><rect x="46" y="12" width="14" height="14" rx="3" fill="#ed852b"/><rect x="12" y="29" width="14" height="14" rx="3" fill="#ce2b22"/><rect x="29" y="29" width="14" height="14" rx="3" fill="#8e9398"/><rect x="46" y="29" width="14" height="14" rx="3" fill="#ef4055"/><rect x="12" y="46" width="14" height="14" rx="3" fill="#9238c9"/><rect x="29" y="46" width="14" height="14" rx="3" fill="#2985f5"/><rect x="46" y="46" width="14" height="14" rx="3" fill="#52c99f"/></g></svg></div>
    <div class="app-ic run"><svg viewBox="0 0 72 72"><rect width="72" height="72" rx="16" fill="#f0f0f0"/><circle cx="36" cy="36" r="31" fill="#2f87ea"/><circle cx="36" cy="36" r="27" fill="none" stroke="#b9dcfa" stroke-width="4" stroke-dasharray="1 2"/><path d="M58 16L31 32l9 8z" fill="#e24a3b"/><path d="M16 54L31 32l9 8z" fill="#f4f4f4"/></svg></div>
    <div class="app-ic"><svg class="opera" viewBox="0 0 80 80"><g fill="none" stroke="#e23450" stroke-width="3"><circle cx="40" cy="40" r="38"/><ellipse cx="40" cy="40" rx="20" ry="33"/><path d="M40 7c30 6 30 60 0 66M48 16c14 12 14 36 0 48" /></g></svg></div>
    <div class="app-ic"><svg viewBox="0 0 72 72"><rect width="72" height="72" rx="16" fill="url(#gGreen)"/><path d="M36 13c34 0 34 42 4 42-5 0-8 0-11 2-3 2-6 2-8 2 3-2 3-4 3-7C4 43 6 13 36 13z" fill="url(#gWhite)"/></svg><b class="badge">2</b></div>
    <div class="app-ic run"><svg viewBox="0 0 72 72"><rect width="72" height="72" rx="16" fill="url(#gBlue)"/><rect x="10" y="20" width="52" height="33" rx="4" fill="#eceaea"/><path d="M11 22l20 18c3 3 7 3 10 0l20-18M11 51l17-14M61 51L44 37" fill="none" stroke="#9a9a9f" stroke-width="1.500"/></svg><b class="badge">7</b></div>
    <div class="app-ic"><svg viewBox="0 0 72 72"><rect width="72" height="72" rx="16" fill="url(#gWeather)"/><circle cx="48" cy="29" r="13" fill="#f6c53d"/><path d="M22 54c-14 0-15-18-3-19 2-16 24-15 25-1 14 0 14 20 0 20z" fill="#e8f0fa"/></svg></div>
    <div class="app-ic"><svg viewBox="0 0 72 72"><g clip-path="url(#round)"><rect width="72" height="72" fill="#6bcf5e"/><path d="M0 12l72 60H0z" fill="#eceef0"/><path d="M0 34l30 38H0z" fill="#e27cba"/><path d="M0 22l72 62" stroke="#f4f4f4" stroke-width="12"/><path d="M40 52l28 20H38z" fill="#f4c235"/><path d="M28 0v72" stroke="#f2f3f5" stroke-width="24"/><path d="M28 0v44" stroke="#3470e6" stroke-width="15"/><circle cx="74" cy="0" r="26" fill="none" stroke="#e6e8e8" stroke-width="7"/></g><circle cx="28" cy="45" r="17" fill="#2f74ec" stroke="#f3f5f8" stroke-width="3"/><path d="M28 32l8 22-8-5-8 5z" fill="#fff"/></svg></div>
    <div class="app-ic"><svg viewBox="0 0 72 72"><rect width="72" height="72" rx="16" fill="#fcfcfc"/><g opacity=".9"><rect x="27" y="5" width="18" height="30" rx="9" fill="#f2922c"/><rect x="27" y="5" width="18" height="30" rx="9" fill="#e9d636" transform="rotate(45 36 36)"/><rect x="27" y="5" width="18" height="30" rx="9" fill="#a2c93c" transform="rotate(90 36 36)"/><rect x="27" y="5" width="18" height="30" rx="9" fill="#66b883" transform="rotate(135 36 36)"/><rect x="27" y="5" width="18" height="30" rx="9" fill="#74b4dc" transform="rotate(180 36 36)"/><rect x="27" y="5" width="18" height="30" rx="9" fill="#8379bd" transform="rotate(225 36 36)"/><rect x="27" y="5" width="18" height="30" rx="9" fill="#b9709f" transform="rotate(270 36 36)"/><rect x="27" y="5" width="18" height="30" rx="9" fill="#e7564b" transform="rotate(315 36 36)"/></g></svg></div>
    <div class="app-ic"><svg viewBox="0 0 72 72"><rect width="72" height="72" rx="16" fill="url(#gGreen)"/><rect x="10" y="20" width="35" height="32" rx="8" fill="url(#gWhite)"/><path d="M48 32l13-9v26l-13-9z" fill="url(#gWhite)"/></svg></div>
    <div class="app-ic run"><svg viewBox="0 0 72 72"><g clip-path="url(#round)"><rect width="72" height="72" fill="#f8f7f6"/><rect width="72" height="22" fill="#e25a4f"/></g><text x="36" y="17" text-anchor="middle" font-family="Inter" font-weight="600" font-size="15" fill="#fff">NOV</text><text x="35" y="61" text-anchor="middle" font-family="Inter" font-weight="300" font-size="44" fill="#222">1</text></svg></div>
    <div class="app-ic"><svg viewBox="0 0 72 72"><rect x="60" y="10" width="14" height="16" rx="4" fill="#b9b3a8"/><rect x="60" y="25" width="14" height="14" rx="3" fill="#58aee0"/><rect x="60" y="39" width="14" height="12" rx="3" fill="#ef8d3b"/><rect x="60" y="50" width="14" height="13" rx="3" fill="#61ce66"/><rect width="70" height="72" rx="16" fill="#a07b47"/><g fill="#8c6a3b" stroke="#7b5c33" stroke-width="1.500"><circle cx="37" cy="36" r="22" fill="none"/><circle cx="37" cy="30" r="8"/><path d="M21 51c4-12 28-12 32 0-8 9-24 9-32 0z"/></g></svg></div>
    <div class="app-ic run"><svg viewBox="0 0 72 72"><rect width="72" height="72" rx="16" fill="#fafafa"/><g stroke="#b4b4b8" stroke-width="1.500"><path d="M27 18h37M27 36h37M27 54h37"/></g><g stroke="#fff" stroke-width="1.500"><circle cx="14" cy="18" r="5" fill="#2c72ee"/><circle cx="14" cy="36" r="5" fill="#dd4a38"/><circle cx="14" cy="54" r="5" fill="#ee9a3a"/></g><g fill="none"><circle cx="14" cy="18" r="6.500" stroke="#2c72ee"/><circle cx="14" cy="36" r="6.500" stroke="#dd4a38"/><circle cx="14" cy="54" r="6.500" stroke="#ee9a3a"/></g></svg><b class="badge">24</b></div>
    <div class="app-ic run"><svg viewBox="0 0 72 72"><g clip-path="url(#round)"><rect width="72" height="72" fill="#f5f4f1"/><rect width="72" height="18" fill="#f8cd3e"/><path d="M0 21h72" stroke="#aaa" stroke-width="2" stroke-dasharray="1 2"/><path d="M0 36h72M0 54h72" stroke="#d2d1ce" stroke-width="1.500"/></g></svg></div>
    <div class="app-ic"><svg viewBox="0 0 72 72"><rect width="72" height="72" rx="16" fill="url(#gDark)"/><svg class="white" x="9" y="21" width="25" height="26" viewBox="0 0 24 24"><use href="#apple"/></svg><text x="33" y="47" font-family="Inter" font-weight="500" font-size="29" textLength="29" fill="#fff">tv</text></svg></div>
    <div class="app-ic"><svg viewBox="0 0 72 72"><rect width="72" height="72" rx="16" fill="url(#gRed)"/><path d="M26 17l27-6v38c0 8-13 9-13 1 0-5 6-6 9-7V25l-19 4v23c0 9-14 10-14 2 0-5 6-6 10-8z" fill="#fff"/></svg></div>
    <div class="app-ic"><svg viewBox="0 0 72 72"><rect width="72" height="72" rx="16" fill="url(#gPurple)"/><g fill="none" stroke="#fff" stroke-width="3"><path d="M24 57a25 25 0 1 1 24 0M27 47a16 16 0 1 1 18 0"/></g><circle cx="36" cy="32" r="6" fill="#fff"/><path d="M30 42c2-3 10-3 12 0l-2 18c-1 4-7 4-8 0z" fill="#fff"/></svg></div>
    <div class="app-ic run"><svg viewBox="0 0 72 72"><rect width="72" height="72" rx="16" fill="url(#gBlue2)"/><path d="M18 10h37l3 20H14z" fill="#f3f5f7"/><path d="M14 27h44v5H14z" fill="#cbd2d8"/><circle cx="36" cy="18" r="7" fill="#59a9d9"/><path d="M36 18v-7a7 7 0 0 1 7 7z" fill="#ef8446"/><path d="M36 18h7a7 7 0 0 1-7 7z" fill="#67b95d"/><path d="M36 32v28" stroke="#d5dde5" stroke-width="3"/><rect x="25" y="58" width="22" height="4" rx="2" fill="#e2e7ec"/></svg></div>
    <div class="app-ic"><svg viewBox="0 0 72 72"><rect width="72" height="72" rx="16" fill="url(#gGreen)"/><g fill="#f4f6f2"><rect x="13" y="46" width="9" height="16" rx="2"/><rect x="26" y="33" width="9" height="29" rx="2"/><rect x="38" y="10" width="9" height="52" rx="2"/><rect x="50" y="23" width="9" height="39" rx="2"/></g></svg></div>
    <div class="app-ic"><svg viewBox="0 0 72 72"><rect width="72" height="72" rx="16" fill="url(#gOrange)"/><path d="M12 61h50" stroke="#fbd08c" stroke-width="3"/><path d="M12 60l5-13 37-32c3-3 7 0 5 4L23 52z" fill="#f6f2ec"/><path d="M35 31l6 6" stroke="#999" stroke-width="2"/></svg></div>
    <div class="app-ic"><svg viewBox="0 0 72 72"><rect width="72" height="72" rx="16" fill="url(#gBlue2)"/><g stroke="#fff" stroke-width="6" stroke-linecap="round"><path d="M32 17l23 38M40 17L23 46M13 44h23M47 44h11M18 53l-1 2"/></g></svg></div>
    <div class="app-ic"><svg viewBox="0 0 72 72"><rect width="72" height="72" rx="16" fill="url(#gSilver)"/><circle cx="36" cy="36" r="29" fill="#333" stroke="#333" stroke-width="4" stroke-dasharray="2 2"/><circle cx="36" cy="36" r="23" fill="none" stroke="#999c9c" stroke-width="4"/><path d="M36 36h23M36 36L24 16M36 36L24 56" stroke="#999c9c" stroke-width="4"/><circle cx="36" cy="36" r="5" fill="#333" stroke="#999c9c" stroke-width="3"/></svg><b class="badge">1</b></div>
    <i class="dsep"></i>
    <div class="app-ic run"><svg viewBox="0 0 72 72"><rect width="72" height="72" rx="16" fill="#f5f5f5"/><path d="M5 39V17C5 9 9 5 17 5h38c8 0 12 4 12 12v22z" fill="#8ba9dd"/><path d="M5 38h62v17c0 8-4 12-12 12H17c-8 0-12-4-12-12z" fill="#24406d"/><path d="M5 52c20 2 40 2 45 15H17c-8 0-12-4-12-15z" fill="#c6d5dc"/><rect x="38" y="34" width="30" height="16" rx="5" fill="#161719"/><path d="M40 50h26l6 19c0 5-4 6-6 6H40c-4 0-7-3-6-7z" fill="#c6cacb"/><path d="M44 56h14v9H42z" fill="#8d9498"/></svg></div>
    <div class="app-ic run"><svg viewBox="0 0 72 72"><rect width="72" height="72" rx="16" fill="#a3b8b6"/><rect x="3" y="3" width="66" height="66" rx="13" fill="#08100f"/><path d="M8 18h56M8 31h56M8 46h56M8 58h56M24 6v60M40 6v60M55 6v60" stroke="#27483f" stroke-width="1"/><path d="M7 39h10l4-27 3 33 2-6h8l4-6 4 10 4-3h18" fill="none" stroke="#74e0be" stroke-width="2"/></svg></div>
    <div class="app-ic run"><svg viewBox="0 0 72 72"><rect width="72" height="72" rx="16" fill="#5a65ea"/><svg class="white" x="10" y="10" width="53" height="51" viewBox="0 0 24 24"><use href="#discord"/></svg></svg></div>
    <div class="app-ic run"><svg class="ij" viewBox="0 0 80 82"><path d="M12 0l30 6-4 60-30 14 4-30-12-18z" fill="#f03d78"/><path d="M12 0l24 3-10 26L0 34z" fill="#f3a04b"/><path d="M2 44l14-6v26l-8 3z" fill="#f77a3b"/><path d="M56 2l24 22-2 44-30 14-20-16 6-50z" fill="#2b78ea"/><path d="M56 2l24 22-14 10z" fill="#35c5f2"/><rect x="16" y="15" width="50" height="50" fill="#0d0508"/><text x="21" y="40" font-family="Liberation Mono" font-weight="bold" font-size="24" fill="#fff">IJ</text><rect x="22" y="56" width="20" height="3" fill="#fff"/></svg></div>
    <div class="app-ic run"><svg class="fold" viewBox="0 0 82 70"><path d="M6 0h20l7 6h43c4 0 6 3 6 6v14H0V7c0-4 2-7 6-7z" fill="#449fd2"/><rect y="12" width="82" height="57" rx="6" fill="#70c2f3"/><path d="M1 62h80" stroke="#57aade" stroke-width="2"/></svg></div>
    <i class="dsep d2"></i>
    <div class="app-ic"><svg class="paper" viewBox="0 0 58 84"><rect x="8" width="40" height="20" fill="#8ca9c6"/><path d="M0 9h40l18 20v55H0z" fill="#f7f7f7"/><path d="M38 2h14l6 28-20-2z" fill="#e3e3e3"/><g stroke="#a5a5a5" stroke-width="1.500"><path d="M5 47h24M5 51h40M5 57h18M5 64h47M5 68h46M5 72h47M5 76h40M5 80h44"/></g></svg></div>
    <div class="app-ic"><svg class="bin" viewBox="0 0 62 84"><path d="M0 12h62l-7 62c-2 10-46 10-48 0z" fill="url(#gGlass)"/><ellipse cx="31" cy="12" rx="31" ry="7" fill="#83888a"/><path d="M4 11l8-9 8 3 6-4 10 5 8-5 10 6 5 5-9 7-8-3-8 4-8-4-9 3z" fill="#ededeb"/><path d="M14 8l8 6M34 6l8 9M26 12l4-6" stroke="#5b5f63" stroke-width="3"/><path d="M22 10h8l2 4h-8z" fill="#57b5a8"/></svg></div>
  </footer>
</main>
</body>
</html>
```

FILE: styles.css
```css
* { box-sizing: border-box; }
body { margin: 0; width: 3086px; height: 2182px; background: #fff; overflow: hidden; font-family: Inter, "Liberation Sans", sans-serif; font-size: 24px; letter-spacing: -1.15px; color: #3e3e3e; white-space: nowrap; }
svg { display: block; flex: none; fill: currentColor; overflow: visible; }
svg.white { fill: #fff; }
i, em, u { font-style: normal; text-decoration: none; }
p { margin: 0; }
.defs { position: absolute; }
.desktop { position: relative; width: 3043px; height: 1984px; margin: 112px 0 0 20px; background: radial-gradient(ellipse 200px 160px at 0 1850px, #090a0c 20%, transparent 100%), radial-gradient(ellipse 120px 200px at 3043px 1850px, #222 20%, transparent 100%), linear-gradient(90deg, #5d5f68, #767880 12%, #6c7079 30%, #7e8288 45%, #6d6f75 60%, #666970 100%); }

.menubar { height: 75px; display: flex; align-items: center; padding: 0 0 3px 39px; background: linear-gradient(90deg, #4c4e31, #52523a 30%, #595b42 55%, #5a6050 75%, #5e6862); color: #f2f2ee; font-size: 26px; font-weight: 500; letter-spacing: -0.2px; text-shadow: 0 2px 4px #0005; border-top: 1px solid #b5b5ae; }
.apple { width: 29px; height: 31px; margin-top: -5px; }
.menus { display: flex; gap: 40.600px; margin-left: 38px; }
.status { margin-left: auto; display: flex; align-items: center; padding-right: 34px; }
.s-play, .s-user { width: 30px; height: 30px; margin-right: 36px; }
.pct { font-size: 22px; letter-spacing: -0.4px; margin-right: 10px; }
.s-bat { width: 52px; height: 26px; margin-right: 38px; }
.s-wifi { width: 36px; height: 26px; margin-right: 39px; }
.s-search { width: 27px; height: 28px; margin-right: 36px; }
.s-ctl { width: 30px; height: 28px; margin-right: 34px; }
.clock { font-size: 26px; letter-spacing: 0; }

.app { height: 1782px; display: flex; flex-direction: column; border-radius: 20px; overflow: hidden; position: relative; background: #fff; }
.titlebar { height: 60px; flex: none; background: #656565; border-top: 2px solid #8b8b88; border-bottom: 2px solid #151515; display: flex; align-items: center; padding: 0 0 2px 16px; gap: 16px; color: #e2e2e2; font-size: 26.500px; letter-spacing: 0; }
.titlebar strong { font-weight: 700; margin-left: 9px; }
.tl { width: 24px; height: 24px; border-radius: 50%; display: block; }
.tl.r { background: #ed695e; } .tl.y { background: #f5bd4e; } .tl.g { background: #60c554; }
.doc-mark { width: 30px; height: 28px; margin: 0 -9px 0 1245px; }
.toolbar { height: 93px; flex: none; background: #f9f9fa; display: flex; align-items: center; color: #4d5f92; }
.ic { width: 45px; height: 45px; }
.tb-new { margin-left: 23px; } .tb-open { margin-left: 23px; } .tb-save { margin-left: 23px; }
.searchbox { margin-left: 131px; width: 883px; height: 57px; border: 2px solid #dfdfdf; border-radius: 5px; background: #fff; display: flex; align-items: center; padding-left: 3px; letter-spacing: -0.7px; }
.searchbox span { margin-left: 9px; color: #4a4a4a; }
.tb-pop { margin-left: 13px; }
.group { display: flex; gap: 23.500px; }
.g1 { margin-left: 343px; } .g2 { margin-left: 51px; } .g3 { margin-left: 51px; }
.sep { width: 3px; height: 55px; background: #dcdcdc; }
.s1 { margin-left: 50px; } .s2 { margin-left: 50px; } .s3 { margin-left: 50px; } .s4 { margin-left: 53px; }
.check { width: 46px; height: 46px; margin: -6px 0 0 54px; }
.git { margin-left: 50px; }
.gpt { margin: -4px 0 0 27px; width: 42px; height: 42px; border-radius: 9px 9px 0 9px; background: #74aa9c; color: #fff; display: grid; place-items: center; }
.gpt svg { width: 31px; height: 31px; }

.content { flex: 1; display: flex; min-height: 0; }
.sidebar { width: 440px; flex: none; background: #dddddd; border-left: 2px solid #e6e6e6; border-right: 4px solid #e2e2e2; display: flex; flex-direction: column; }
.side-head { height: 76px; display: flex; align-items: center; color: #4d5f92; padding-right: 32px; gap: 25px; }
.side-head span { margin: -15px auto 0 43px; }
.side-head .ic { width: 32px; height: 32px; }
.combo-row { display: flex; align-items: center; height: 42px; }
.combo { width: 386px; height: 42px; background: #fff; display: flex; align-items: center; justify-content: space-between; padding: 0 14px 0 15px; }
.caret { border: 8px solid transparent; border-top: 9px solid #333; border-bottom: 0; }
.help { width: 24px; height: 24px; margin: 8px 0 0 14px; }
.side-search { margin-top: 11px; height: 43px; width: 434px; background: #fff; border-radius: 4px; display: flex; align-items: center; padding-left: 4px; }
.side-search svg { width: 24px; height: 24px; margin-right: 8px; }
.side-search, .side-btn { letter-spacing: -0.7px; }
.side-btn { height: 59px; margin-top: 2px; text-align: center; line-height: 60px; }
.side-head.groups { height: 77px; margin-top: -3px; }
.side-head.groups span { margin-top: -12px; }
.filter { margin: 4px 23px 0 24px; height: 42px; background: #fff; border-radius: 4px; line-height: 42px; padding-left: 14px; letter-spacing: -0.9px; }
.all { margin-top: 15px; height: 65px; background: #a3b6e6; display: flex; align-items: center; padding-left: 31px; letter-spacing: -0.9px; }
.all i { width: 14px; height: 14px; border-radius: 50%; background: #848484; margin-right: 14px; }
.all b { margin: 0 46px 0 auto; width: 29px; height: 42px; border-radius: 14px; background: #6b6b6b; color: #fff; font-weight: 400; text-align: center; line-height: 42px; }
.add { margin: auto 0 13px; text-align: center; letter-spacing: -0.9px; }

.main { flex: 1; min-width: 0; display: flex; flex-direction: column; }
.libtabs { height: 72px; flex: none; background: #f3f3f3; }
.libtab { width: 152px; height: 72px; background: #fff; border-top: 6px solid #4d5f92; color: #4d5f92; display: flex; align-items: center; padding: 2px 0 0 23px; }
.libtab svg { width: 28px; height: 28px; margin-left: 3px; }
.row { display: grid; grid-template-columns: 57px 56px 56px 152px 604px 1fr 320px; height: 58.600px; align-items: center; background: #fff; padding-top: 2px; }
.row > :nth-child(1) { margin-left: 17px; } .row > :nth-child(2) { margin-left: 16px; } .row > :nth-child(3) { margin-left: 16px; } .row > span { margin-left: 28px; }
.thead { height: 73px; flex: none; border-bottom: 2px solid #e2e2e2; padding-top: 4px; letter-spacing: -1px; }
.ti { width: 24px; height: 24px; }
.rows { height: 703px; flex: none; }
.rows .row:nth-child(even) { background: #efefef; }
.rows .row.sel { background: #a3b6e6; }
.stars { display: flex; gap: 4.500px; color: #a0a0a0; padding-left: 10px; }
.stars svg { width: 24px; height: 24px; }
.flags { display: flex; padding-left: 38px; }
.flags svg { width: 24px; height: 24px; }
.flags svg:nth-child(2) { margin-left: 85px; } .flags svg:nth-child(3) { margin-left: 33px; }

.editor { flex: 1; min-height: 0; display: flex; margin-top: 3px; border-top: 2px solid #dcdcdc; }
.rail { width: 63px; flex: none; background: #f3f3f3; display: flex; flex-direction: column; align-items: center; padding-right: 13px; }
.rail svg { width: 24px; height: 24px; margin-bottom: 17.500px; }
.rail .r-close { margin: 17px 0 0; }
.r-type { writing-mode: vertical-rl; transform: rotate(180deg); color: #4d5f92; font-size: 25px; letter-spacing: -0.1px; height: 170px; margin: 158px -14px 0 0; text-align: left; }
.rail .r-sum { width: 30px; height: 32px; margin: 109px -8px 19px 0; }
.rail i { width: 42px; height: 4px; background: #dcdcdc; margin: -5px -14px 12px 0; }
.rail .chev { margin: 0 0 3px; }
.ed-body { flex: 1; min-width: 0; display: flex; flex-direction: column; }
.tabs { height: 72px; flex: none; background: #f3f3f3; display: flex; }
.tab { height: 72px; display: flex; align-items: center; justify-content: center; border-right: 2px solid #dcdcdc; border-bottom: 2px solid #dcdcdc; gap: 9px; letter-spacing: -1.150px; padding-top: 4px; }
.tab svg { width: 24px; height: 24px; }
.tab em { margin-right: 3px; }
.tab.on { background: #fff; border-top: 6px solid #4d5f92; border-bottom: 0; border-right: 0; color: #4d5f92; }
.tab.on svg { color: #3e3e3e; }
.w228 { width: 228px; } .w224 { width: 225px; } .w196 { width: 196px; } .w158 { width: 158px; } .w165 { width: 165px; } .w191 { width: 191px; } .w202 { width: 202px; } .w227 { width: 227px; } .w240 { width: 240px; }
.panes { flex: 1; display: flex; min-height: 0; }
.form { width: 1272px; flex: none; border-right: 2px solid #dcdcdc; padding: 11px 12px 0 0; display: flex; flex-direction: column; gap: 12.800px; }
.frow { display: flex; height: 126px; align-items: center; position: relative; }
.frow label { width: 165px; padding-left: 30px; padding-top: 11px; letter-spacing: -0.85px; }
.field { flex: 1; height: 126px; border: 2px solid #dcdcdc; border-radius: 7px; padding-left: 14px; line-height: 125px; font-size: 23.500px; letter-spacing: -1.1px; position: relative; }
.field.num { font-size: 24px; letter-spacing: -0.3px; }
.warn { position: absolute; left: -14px; bottom: -15px; width: 23px; height: 23px; }
.gen { width: 150px; display: flex; gap: 8px; margin-top: -71px; padding-left: 12px; align-items: center; letter-spacing: -1.1px; }
.gen svg { width: 24px; height: 24px; }
.preview { padding: 18px 0 0 16px; font-family: "Liberation Sans", Arial, sans-serif; font-size: 32.200px; letter-spacing: 0; line-height: 36.400px; color: #000; }
.it { font-style: italic; }
.shade { position: absolute; left: 0; right: 0; bottom: 0; height: 80px; background: linear-gradient(transparent, #00000024); }

.chat { position: absolute; left: 1443px; top: 268px; width: 1289px; height: 801px; border: 7px solid #007aff; background: #f4ebef; display: flex; flex-direction: column; color: #000; }
.chat-head { height: 71px; flex: none; background: #faeef3; border-bottom: 3px solid #d5cace; display: flex; align-items: center; padding: 0 0 5px 14px; gap: 22px; }
.chat-head .tl { width: 32px; height: 32px; }
.chat-head .tl.r { background: #ff5f57; } .chat-head .tl.y { background: #febc2e; } .chat-head .tl.g { background: #28c840; }
.chat-head strong { margin-left: 392px; font-size: 34.500px; color: #4b494b; font-weight: 700; letter-spacing: 0; }
.hand { font-family: Lato, "Liberation Sans", sans-serif; font-size: 34px; font-weight: 500; letter-spacing: 0; line-height: 1; font-style: italic; }
.h-name { margin-left: 6px; }
.btn { border: 4px solid #cc0000; color: #cc0000; display: grid; place-items: center; letter-spacing: 2px; }
.copy { width: 118px; height: 46px; margin: 0 65px 0 auto; font-size: 31px; }
.chat-log { flex: 1; display: flex; border-bottom: 4px solid #000; }
.who { width: 190px; border-right: 3px solid #000; margin-top: 5px; display: flex; flex-direction: column; justify-content: flex-end; gap: 30px; padding: 0 0 21px 28px; }
.who .hand + .hand { padding-left: 6px; }
.msgs { flex: 1; display: flex; flex-direction: column; justify-content: flex-end; padding: 0 123px 15px 54px; }
.bubble { position: relative; border: 4px solid #000; border-radius: 26px / 50%; display: flex; align-items: center; justify-content: center; }
.bubble svg { position: absolute; fill: #f4ebef; stroke: #000; stroke-width: 3; }
.out { align-self: flex-end; width: 370px; height: 71px; word-spacing: 5px; padding-top: 6px; }
.out svg { right: -14px; bottom: -28px; width: 34px; height: 30px; }
.in { width: 291px; height: 59px; word-spacing: 5px; padding: 6px 14px 0 0; }
.in svg { left: -9px; bottom: -18px; width: 24px; height: 22px; }
.chat-in { height: 77px; flex: none; display: flex; align-items: center; }
.lbl { width: 190px; height: 77px; border-right: 3px solid #000; padding: 22px 0 0 46px; font-size: 38px; letter-spacing: 1px; }
.q { margin: 7px 0 0 64px; word-spacing: 4.600px; }
.cursor { width: 3px; height: 42px; background: #000; margin-left: 20px; }
.send { width: 144px; height: 56px; margin: 0 31px 0 auto; font-size: 33px; }

.newtab { position: absolute; left: 1471px; top: 1306px; width: 225px; height: 95px; background: #f2f2f2; border: 2px solid #dedede; display: grid; place-items: center; color: #000; }
.newtab div { width: 162px; height: 32px; background: #fcfcfc; display: flex; align-items: center; padding-left: 4px; gap: 4px; margin-top: 6px; }
.newtab svg { width: 31px; height: 22px; }
.newtab .hand { font-size: 25px; letter-spacing: -0.3px; font-weight: 700; }
.note { position: absolute; color: #cc0000; transform-origin: left center; }
.n-chatty { left: 2896px; top: 266px; font-size: 31px; transform: rotate(5deg); }
.n-add { left: 1329px; top: 1271px; font-size: 31px; transform: rotate(2deg); }
.n-tab { left: 1358px; top: 1312px; font-size: 31px; }
.n-sum { left: 229px; top: 1521px; font-size: 32px; transform: rotate(-5deg); }
.n-btn { left: 284px; top: 1561px; font-size: 32px; transform: rotate(2deg); }
.arrow { position: absolute; fill: none; stroke: #cc0000; stroke-width: 4; stroke-linecap: round; stroke-linejoin: round; }
.a1 { left: 2952px; top: 198px; width: 60px; height: 64px; }
.a2 { left: 1450px; top: 1143px; width: 90px; height: 170px; }
.a3 { left: 410px; top: 1548px; width: 44px; height: 32px; }

.dock { position: absolute; left: 79px; top: 1854px; width: 2887px; height: 121px; border-radius: 34px; background: linear-gradient(#434447, #54555c); border: 2px solid #717377; box-shadow: 0 0 0 1px #222; display: flex; padding-left: 3px; }
.app-ic { width: 96.200px; flex: none; height: 116px; position: relative; display: flex; justify-content: center; padding-top: 17px; }
.app-ic > svg { width: 72px; height: 72px; }
.app-ic.run::after { content: ""; position: absolute; left: 44px; top: 106px; width: 8px; height: 8px; border-radius: 50%; background: #d2d3d6; }
.badge { position: absolute; right: -1px; top: 9px; width: 34px; height: 34px; border-radius: 50%; background: #e34c41; color: #fff; font-weight: 500; font-size: 22px; text-align: center; line-height: 34px; }
.app-ic > .opera { width: 79px; height: 79px; margin-top: -4px; }
.app-ic > .ij { width: 80px; height: 82px; margin-top: -5px; }
.app-ic > .fold { width: 82px; height: 70px; margin-top: 2px; }
.app-ic > .paper { width: 58px; height: 84px; margin-top: -7px; }
.app-ic > .bin { width: 62px; height: 84px; margin: -6px 4px 0 0; }
.dsep { width: 2px; height: 86px; background: #7b7d81; margin: 15px 20px 0; flex: none; }
.d2 { margin: 15px 22px 0; }
```
